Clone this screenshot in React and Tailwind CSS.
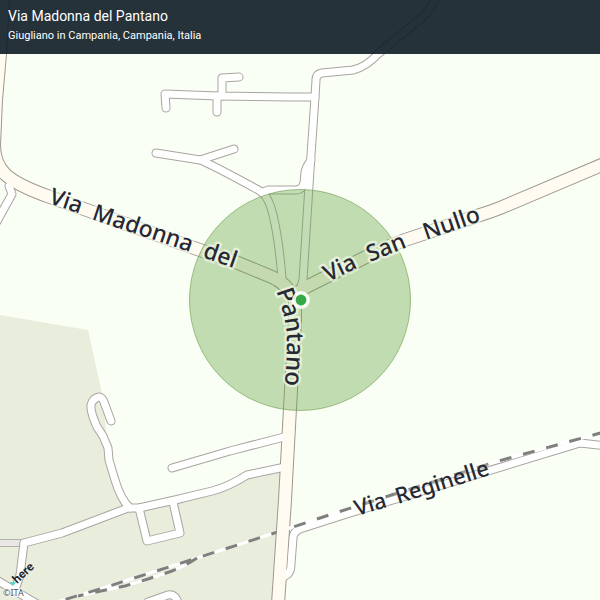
import React from "react";

const mainRoads = [
  "M3 -4 L0 54 L-4 100 L-6 145 Q-6 163 5 174 Q16 185 50 197 L197 249 L238 263 L272 277 Q286 283 294 298",
  "M295 296 L295 320 L291 390 L285 500 L278 604",
  "M295 296 Q298 291 310 285 L366 257 Q385 247 405 240 L480 215 Q490 212 500 208 L604 164",
];

const sideRoads = [
  "M436 -4 Q430 12 419 20 L378 54 Q366 67 353 70 L322 73 Q316 74 316 80 L315 97 L310 170 L303 280 L300 290",
  "M311 160 L309 163 Q306 167 305 172 L304 183 Q302 190 296 190 L268 190 L262 193",
  "M156 153 L200 160 L234 149",
  "M200 160 Q209 163 262 192 Q269 198 273 215 Q279 240 282 278",
  "M166 108 L165 94 L218 96 L288 97 L315 97",
  "M217 112 L217 96",
  "M222 96 L222 78 L239 77",
  "M-5 225 L12 194 L9 186",
  "M24 543 L62 533 L128 508 L139 508 L175 500 L212 491 Q228 487 247 475 L285 467",
  "M172 468 L230 451 L284 437",
  "M139 508 L147 541 L180 533 L173 502",
  "M130 508 Q121 500 115 480 L109 460 L108 448 L103 436 L97 427 Q90 411 91 405 Q93 398 99 397 Q102 397 104 402 L111 421",
  "M24 543 L20 575 L15 590",
  "M-5 579 L17 592 L44 608",
  "M148 602 L168 595 Q176 593 179 606",
  "M282 578 L288 574 Q291 571 291 564 L293 538 Q293 532 300 529 L350 513 L580 443 L606 446",
];

const rails = [
  "M604 432 L495 462 L332 514 L290 528 L197 558 L150 573 L103 588 L50 604",
  "M197 558 Q185 566 172 571 L148 579 L125 586 L78 596",
];

const words = [
  { text: "Via", size: 23, path: "M48 203 L108 223" },
  { text: "Madonna", size: 23, path: "M91 219 L211 259" },
  { text: "del", size: 23, path: "M202 257 L262 278" },
  { text: "Pantano", size: 24, path: "M276 291 Q287 320 287 343 T283 400" },
  { text: "Via", size: 23, path: "M328 282 L378 258" },
  { text: "San", size: 23, path: "M370 262 L430 238" },
  { text: "Nullo", size: 23, path: "M426 240 L501 214" },
  { text: "Via", size: 22, path: "M357 516 L417 498" },
  { text: "Reginelle", size: 22, path: "M398 504 L518 466" },
];

function Lines({ paths, color, width, cap = "round", dash }) {
  return (
    <g fill="none" stroke={color} strokeWidth={width} strokeLinecap={cap} strokeLinejoin="round" strokeDasharray={dash}>
      {paths.map((d) => (
        <path key={d} d={d} />
      ))}
    </g>
  );
}

function StreetMap() {
  return (
    <svg
      viewBox="0 0 600 600"
      preserveAspectRatio="xMidYMid slice"
      className="block h-screen w-full bg-[#fafff5]"
      role="img"
      aria-label="Map of Via Madonna del Pantano"
    >
      <path
        d="M0 315 L88 330 L103 398 L107 440 L116 480 L130 508 L212 491 L247 475 L283 467 L276 600 L0 600Z"
        fill="#e9eddc"
      />
      <Lines paths={["M-4 543 L24 543"]} color="#b5b0ab" width={8} />
      <Lines paths={["M-4 543 L24 543"]} color="#eae8e7" width={6} />
      <Lines paths={sideRoads} color="#a9a4a0" width={9} />
      <Lines paths={mainRoads} color="#9d9890" width={14} />
      <Lines paths={sideRoads} color="#ffffff" width={7} />
      <Lines paths={rails} color="#ffffff" width={3} cap="butt" />
      <Lines paths={rails} color="#7f7f7d" width={3} cap="butt" dash="12 12" />
      <Lines paths={mainRoads} color="#fffbf1" width={12} />

      <circle cx="300" cy="300" r="110.5" fill="#6ba748" fillOpacity="0.4" stroke="#7ba65c" strokeOpacity="0.7" />

      {words.map((w, i) => (
        <React.Fragment key={i}>
          <path id={`street-${i}`} d={w.path} fill="none" />
          <text
            className="font-medium font-['Noto_Sans',sans-serif]"
            fontSize={w.size}
            fill="#262833"
            stroke="#fafff5"
            strokeOpacity={i > 6 ? 0.2 : 0.6}
            strokeWidth="5"
            strokeLinejoin="round"
            paintOrder="stroke"
          >
            <textPath href={`#street-${i}`}>{w.text}</textPath>
          </text>
        </React.Fragment>
      ))}

      <circle cx="301" cy="300" r="9" fill="#ffffff" fillOpacity="0.85" />
      <circle cx="301" cy="300" r="5.4" fill="#34a946" />

      <path d="M10 582 L16 582 L13 586Z" fill="#48dad0" />
      <text
        className="font-black font-['Lato',sans-serif]"
        fontSize="12"
        fill="#20242c"
        transform="translate(17 584) rotate(-43)"
      >
        here
      </text>
      <text
        className="font-['Noto_Sans',sans-serif]"
        x="3"
        y="596"
        fontSize="9"
        fill="#555555"
        stroke="#ffffff"
        strokeOpacity="0.7"
        strokeWidth="2"
        paintOrder="stroke"
      >
        ©ITA
      </text>
    </svg>
  );
}

export default function App() {
  return (
    <main className="relative overflow-hidden">
      <StreetMap />
      <header className="absolute inset-x-0 top-0 bg-[#0e1c26]/90 px-2 pt-1 pb-2.5 font-['Roboto',sans-serif] text-white">
        <h1 className="text-[14px] leading-6">Via Madonna del Pantano</h1>
        <p className="text-[11px] leading-4">Giugliano in Campania, Campania, Italia</p>
      </header>
    </main>
  );
}
